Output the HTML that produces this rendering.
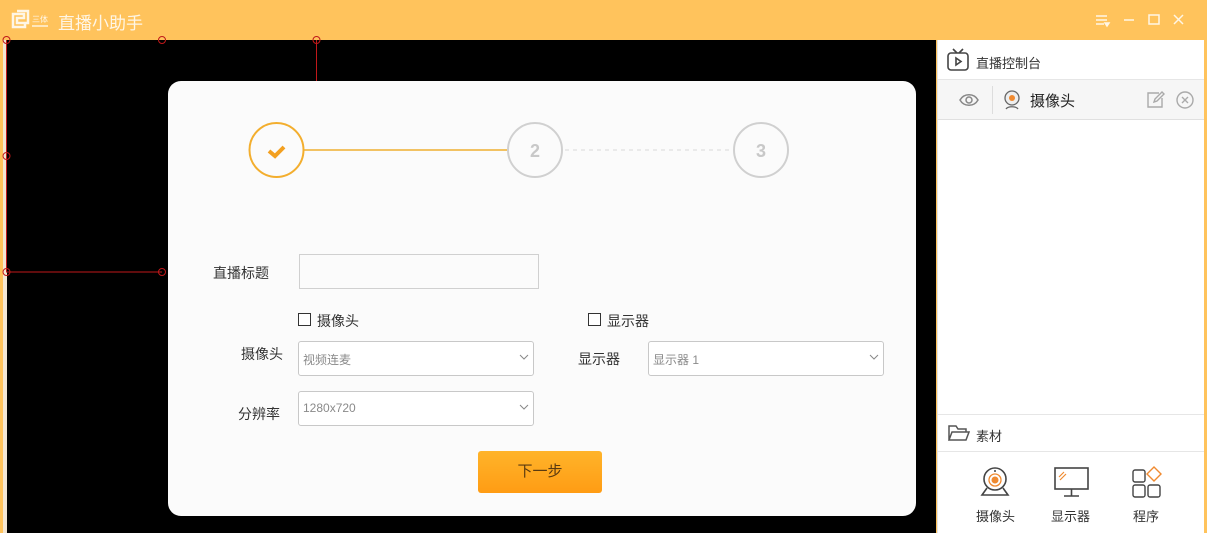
<!DOCTYPE html>
<html><head><meta charset="utf-8"><style>
*{margin:0;padding:0;box-sizing:border-box}
body{width:1207px;height:533px;overflow:hidden;background:#ffc35c;font-family:"Liberation Sans","Noto Sans CJK SC",sans-serif;position:relative}
.abs{position:absolute}
.title{left:58px;top:9px;color:#fff6e6;font-size:17px}
.stage{left:7px;top:40px;width:929px;height:493px;background:#000}
.lstrip{left:3px;top:40px;width:4px;height:493px;background:#f3e6d3}
.card{left:168px;top:81px;width:748px;height:435px;background:#fbfbfb;border-radius:13px}
.rp{left:937px;top:40px;width:267px;height:493px;background:#fff;border-left:1px solid #e4e4e4}
.lbl{font-size:14px;color:#333}
.sel{background:#fff;border:1px solid #c8c8c8;border-radius:3px;height:35px;font-size:12px;color:#8a8a8a;padding:9px 4px}
.sel svg{position:absolute;right:4px;top:12px}
.cb{width:13px;height:13px;border:1px solid #333;background:#fff}
</style></head><body>
<svg class="abs" style="left:10px;top:9px" width="44" height="22" viewBox="0 0 44 22">
<path d="M3 5h11v4H7v5h8v4H3z M7 2h11v12h-4" fill="none" stroke="#fff6e6" stroke-width="2.5"/>
<text x="22" y="13" font-size="8" fill="#fff6e6" font-family="Noto Sans CJK SC">三体</text>
<rect x="22" y="16" width="16" height="2" fill="#fff6e6" opacity=".7"/>
</svg>
<div class="abs title">直播小助手</div>
<svg class="abs" style="left:1094px;top:13px" width="100" height="16" viewBox="0 0 100 16">
<g stroke="#fff6e6" stroke-width="1.5" fill="none">
<path d="M2 3h11M2 7h11M2 11h8"/><path d="M11 10l2 3 2-3z" fill="#fff6e6"/>
<path d="M30 7h10"/><rect x="55" y="2" width="10" height="9"/><path d="M80 2l9 9M89 2l-9 9"/></g></svg>
<div class="abs lstrip"></div>
<div class="abs stage"></div>
<svg class="abs" style="left:0;top:36px" width="330" height="240">
<g stroke="#c0181a" stroke-width="1" fill="none">
<path d="M6.5 4V236H162M316.5 4V45"/>
<circle cx="6.5" cy="4" r="3.5"/><circle cx="162" cy="4" r="3.5"/><circle cx="316.5" cy="4" r="3.5"/>
<circle cx="6.5" cy="120" r="3.5"/><circle cx="6.5" cy="236" r="3.5"/><circle cx="162" cy="236" r="3.5"/></g></svg>
<div class="abs card"></div>
<svg class="abs" style="left:240px;top:115px" width="560" height="70">
<line x1="64" y1="35" x2="268" y2="35" stroke="#f0b030" stroke-width="1.5"/>
<line x1="325" y1="35" x2="494" y2="35" stroke="#d8d8d8" stroke-width="1" stroke-dasharray="4 4"/>
<circle cx="36.5" cy="35" r="27" fill="none" stroke="#f3ae2e" stroke-width="2"/>
<path d="M29 36l6 5 9-9" fill="none" stroke="#f3a020" stroke-width="4"/>
<circle cx="295" cy="35" r="27" fill="none" stroke="#d0d0d0" stroke-width="2"/>
<circle cx="521" cy="35" r="27" fill="none" stroke="#d0d0d0" stroke-width="2"/>
<text x="295" y="42" text-anchor="middle" font-size="18" font-weight="bold" fill="#c8c8c8" font-family="Liberation Sans">2</text>
<text x="521" y="42" text-anchor="middle" font-size="18" font-weight="bold" fill="#c8c8c8" font-family="Liberation Sans">3</text>
</svg>
<div class="abs lbl" style="left:213px;top:263px">直播标题</div>
<div class="abs" style="left:299px;top:254px;width:240px;height:35px;border:1px solid #d0d0d0;background:#fbfbfb"></div>
<div class="abs cb" style="left:298px;top:313px"></div><div class="abs lbl" style="left:317px;top:311px">摄像头</div>
<div class="abs cb" style="left:588px;top:313px"></div><div class="abs lbl" style="left:607px;top:311px">显示器</div>
<div class="abs lbl" style="left:241px;top:344px">摄像头</div>
<div class="abs sel" style="left:298px;top:341px;width:236px">视频连麦<svg width="10" height="7"><path d="M1 1l4 4 4-4" stroke="#888" fill="none"/></svg></div>
<div class="abs lbl" style="left:578px;top:349px">显示器</div>
<div class="abs sel" style="left:648px;top:341px;width:236px">显示器 1<svg width="10" height="7"><path d="M1 1l4 4 4-4" stroke="#888" fill="none"/></svg></div>
<div class="abs lbl" style="left:238px;top:404px">分辨率</div>
<div class="abs sel" style="left:298px;top:391px;width:236px">1280x720<svg width="10" height="7"><path d="M1 1l4 4 4-4" stroke="#888" fill="none"/></svg></div>
<div class="abs" style="left:478px;top:451px;width:124px;height:42px;border-radius:3px;background:linear-gradient(#ffb42a,#ff9c14);color:#5a3a10;font-size:15px;text-align:center;line-height:42px">下一步</div>
<div class="abs rp"></div>
<svg class="abs" style="left:946px;top:48px" width="24" height="24" viewBox="0 0 24 24"><g stroke="#444" stroke-width="1.6" fill="none"><rect x="2" y="5" width="20" height="17" rx="3"/><path d="M7 1l4 4M17 1l-4 4M10 10v7l5-3.5z"/></g></svg>
<div class="abs" style="left:976px;top:53px;font-size:13px;color:#333">直播控制台</div>
<div class="abs" style="left:938px;top:79px;width:266px;height:41px;background:#f6f6f6;border-top:1px solid #e6e6e6;border-bottom:1px solid #e0e0e0"></div>
<div class="abs" style="left:992px;top:86px;width:1px;height:28px;background:#ddd"></div>
<svg class="abs" style="left:958px;top:91px" width="22" height="18"><path d="M2 9c4-7 14-7 18 0c-4 7-14 7-18 0z" stroke="#888" stroke-width="1.5" fill="none"/><circle cx="11" cy="9" r="3" stroke="#888" stroke-width="1.5" fill="none"/></svg>
<svg class="abs" style="left:1002px;top:89px" width="20" height="22"><circle cx="10" cy="9" r="7" stroke="#666" stroke-width="1.3" fill="#eee"/><circle cx="10" cy="9" r="3" fill="#f08a30"/><path d="M4 20c2-3 10-3 12 0" stroke="#666" stroke-width="1.3" fill="none"/></svg>
<div class="abs" style="left:1030px;top:90px;font-size:15px;color:#222">摄像头</div>
<svg class="abs" style="left:1145px;top:90px" width="20" height="20"><path d="M14 3H3v14h14V8M9 12l1-3 7-7 2 2-7 7z" stroke="#aaa" stroke-width="1.4" fill="none"/></svg>
<svg class="abs" style="left:1175px;top:90px" width="20" height="20"><circle cx="10" cy="10" r="8" stroke="#aaa" stroke-width="1.4" fill="none"/><path d="M7 7l6 6M13 7l-6 6" stroke="#aaa" stroke-width="1.4"/></svg>
<div class="abs" style="left:938px;top:414px;width:266px;height:1px;background:#e6e6e6"></div>
<div class="abs" style="left:938px;top:451px;width:266px;height:1px;background:#e6e6e6"></div>
<svg class="abs" style="left:947px;top:423px" width="24" height="20"><path d="M2 17V3h7l2 3h8v3M2 17l3-8h17l-3 8z" stroke="#555" stroke-width="1.5" fill="none"/></svg>
<div class="abs" style="left:976px;top:426px;font-size:13px;color:#333">素材</div>
<svg class="abs" style="left:979px;top:465px" width="32" height="34"><circle cx="16" cy="14" r="11" stroke="#444" stroke-width="1.6" fill="none"/><circle cx="16" cy="15" r="6" stroke="#f08a30" stroke-width="1.3" fill="none"/><circle cx="16" cy="15" r="3.5" fill="#f08a30"/><circle cx="16" cy="6" r="1" fill="#444"/><path d="M8 23l-5 7h26l-5-7" stroke="#444" stroke-width="1.6" fill="none"/></svg>
<svg class="abs" style="left:1054px;top:467px" width="36" height="32"><rect x="1" y="1" width="33" height="21" stroke="#444" stroke-width="1.6" fill="none"/><path d="M17.5 22v7M10 29h15" stroke="#444" stroke-width="1.6"/><path d="M5 10l5-5M6 13l6-6" stroke="#f08a30" stroke-width="1.2"/></svg>
<svg class="abs" style="left:1132px;top:466px" width="32" height="32"><g stroke="#444" stroke-width="1.4" fill="none"><rect x="1" y="4" width="12" height="12" rx="2"/><rect x="1" y="19" width="12" height="12" rx="2"/><rect x="16" y="19" width="12" height="12" rx="2"/></g><path d="M22 1l7 7-7 7-7-7z" stroke="#f08a30" stroke-width="1.4" fill="none"/></svg>
<div class="abs" style="left:976px;top:506px;font-size:13px;color:#333">摄像头</div>
<div class="abs" style="left:1051px;top:506px;font-size:13px;color:#333">显示器</div>
<div class="abs" style="left:1133px;top:506px;font-size:13px;color:#333">程序</div>
</body></html>
